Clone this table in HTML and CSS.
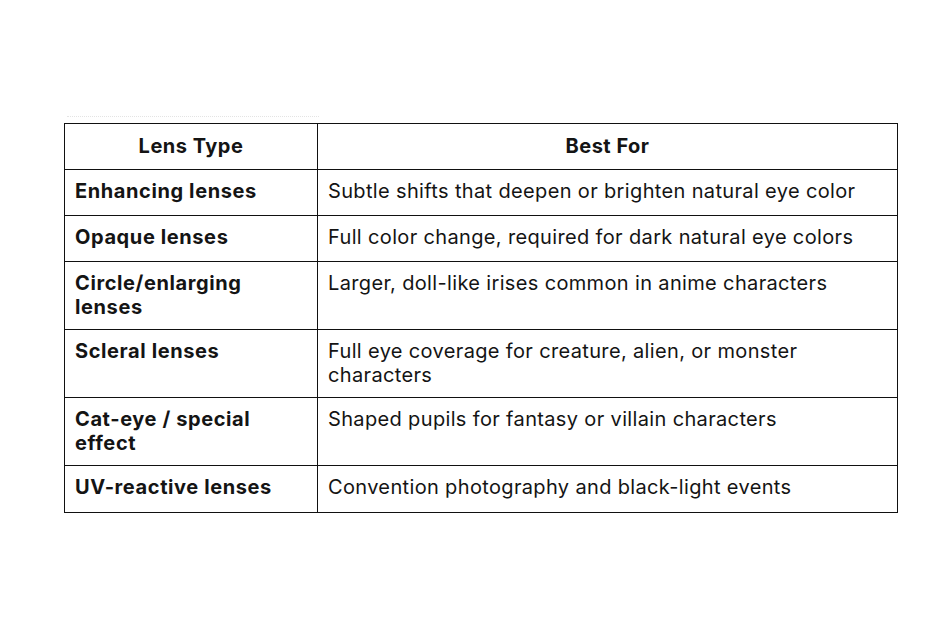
FILE: index.html
```html
<!DOCTYPE html>
<html>
<head>
<meta charset="utf-8">
<link rel="stylesheet" href="styles.css">
</head>
<body>
<div class="page">
  <div class="dots"></div>
  <table class="lens-table">
    <thead>
      <tr><th class="c1">Lens Type</th><th class="c2">Best For</th></tr>
    </thead>
    <tbody>
      <tr class="short"><td class="name">Enhancing lenses</td><td>Subtle shifts that deepen or brighten natural eye color</td></tr>
      <tr class="short"><td class="name">Opaque lenses</td><td>Full color change, required for dark natural eye colors</td></tr>
      <tr class="tall"><td class="name">Circle/enlarging<br>lenses</td><td>Larger, doll-like irises common in anime characters</td></tr>
      <tr class="tall"><td class="name">Scleral lenses</td><td>Full eye coverage for creature, alien, or monster<br>characters</td></tr>
      <tr class="tall"><td class="name">Cat-eye / special<br>effect</td><td>Shaped pupils for fantasy or villain characters</td></tr>
      <tr class="last"><td class="name">UV-reactive lenses</td><td>Convention photography and black-light events</td></tr>
    </tbody>
  </table>
</div>
</body>
</html>
```

FILE: styles.css
```css
html, body {
  margin: 0;
  padding: 0;
  background: #ffffff;
}
.page {
  padding: 116px 0 0 64px;
  font-family: Inter, "Liberation Sans", sans-serif;
  color: #141414;
}
.dots {
  width: 252px;
  margin-left: 3px;
  height: 0;
  border-top: 1px dotted #e4e4e4;
  margin-bottom: 6px;
}
.lens-table {
  border-collapse: collapse;
  width: 834px;
  table-layout: fixed;
  font-size: 20px;
  line-height: 24px;
  letter-spacing: 0.35px;
}
.lens-table th,
.lens-table td {
  border: 1px solid #111;
  padding: 9px 10px 0 10px;
  vertical-align: top;
  text-align: left;
}
.lens-table th {
  text-align: center;
  font-weight: 700;
  height: 35px;
  padding-top: 10px;
  letter-spacing: 0.5px;
}
.c1 { width: 232px; }
.lens-table td { font-weight: 400; }
.lens-table td.name { font-weight: 700; letter-spacing: 0.6px; }
.short td { height: 36px; }
.tall td { height: 58px; }
.last td { height: 37px; }
```
